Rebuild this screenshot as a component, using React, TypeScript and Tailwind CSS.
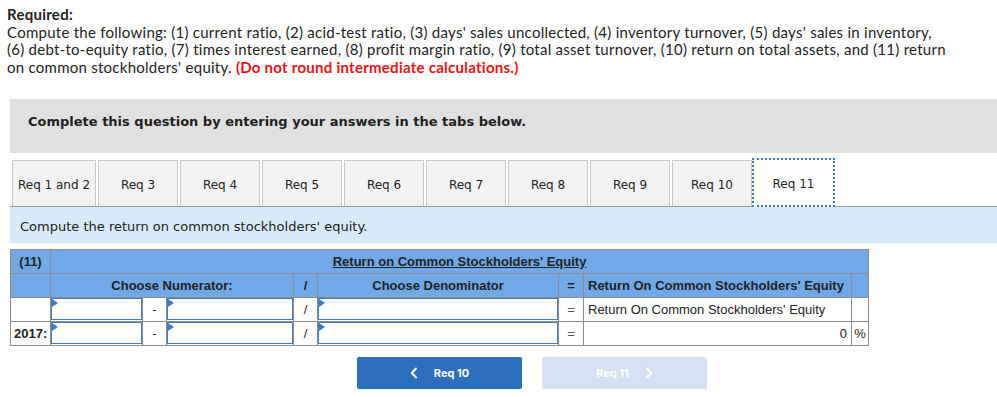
const TABS = ["Req 1 and 2", "Req 3", "Req 4", "Req 5", "Req 6", "Req 7", "Req 8", "Req 9", "Req 10"];

function Picker({ w }: { w: string }) {
  return (
    <div className={`relative h-[22px] ${w} border border-[#3f7bc4] bg-white`}>
      <span className="absolute left-0 top-0 h-0 w-0 border-y-[4px] border-l-[6px] border-y-transparent border-l-[#3f7bc4]" />
    </div>
  );
}

export default function App() {
  return (
    <div className="w-[997px] h-[397px] bg-white text-[#222]">
      <div className="pl-[7px] pt-[6px] font-['Lato',sans-serif] text-[15px] leading-[17.7px] tracking-[0.26px] whitespace-nowrap">
        <div className="font-bold">Required:</div>
        <div>
          Compute the following: (1) current ratio, (2) acid-test ratio, (3) days' sales uncollected, (4) inventory turnover, (5) days' sales in inventory,
          <br />
          (6) debt-to-equity ratio, (7) times interest earned, (8) profit margin ratio, (9) total asset turnover, (10) return on total assets, and (11) return
          <br />
          on common stockholders' equity. <span className="font-bold text-[#ee1111]">(Do not round intermediate calculations.)</span>
        </div>
      </div>

      <div className="ml-[10px] mt-[22px] flex h-[54px] items-center bg-[#e0e0e0] pb-[9px] pl-[18px] font-['DejaVu_Sans',sans-serif] text-[13px] font-bold">
        Complete this question by entering your answers in the tabs below.
      </div>

      <div className="ml-[10px] mt-[7px] flex h-[47px] items-stretch border-b border-[#999] pl-[2px] font-['DejaVu_Sans',sans-serif] text-[12px]">
        {TABS.map((t, i) => (
          <div
            key={t}
            className={`flex items-center justify-center border border-b-0 border-[#c8c8c8] bg-[#f2f2f2] pt-[3px] ${i === 0 ? "w-[84px]" : "w-[80px]"} ${i === TABS.length - 1 ? "" : "mr-[2px]"}`}
          >
            {t}
          </div>
        ))}
        <div className="relative -mt-[2px] -mb-[1px] flex w-[83px] items-center justify-center border-2 border-dotted border-[#3a7bd0] bg-white pt-[3px]">
          Req 11
        </div>
      </div>

      <div className="ml-[10px] flex h-[36px] items-center bg-[#d6eaf8] pl-[10px] pt-[4px] font-['DejaVu_Sans',sans-serif] text-[13px]">
        Compute the return on common stockholders' equity.
      </div>

      <table className="ml-[10px] mt-[6px] w-[858px] table-fixed border-collapse font-['Liberation_Sans',Arial,sans-serif] text-[13px]">
        <colgroup>
          <col className="w-[40px]" />
          <col className="w-[92px]" />
          <col className="w-[24px]" />
          <col className="w-[127px]" />
          <col className="w-[24px]" />
          <col className="w-[241px]" />
          <col className="w-[25px]" />
          <col className="w-[268px]" />
          <col className="w-[17px]" />
        </colgroup>
        <tbody>
          <tr className="h-[24px] bg-[#70a8e8] font-bold">
            <td className="border border-[#8c8c8c] text-center">(11)</td>
            <td colSpan={8} className="border border-[#8c8c8c] text-center">
              <span className="underline">Return on Common Stockholders' Equity</span>
            </td>
          </tr>
          <tr className="h-[24px] bg-[#70a8e8] font-bold">
            <td className="border border-[#8c8c8c]" />
            <td colSpan={3} className="border border-[#8c8c8c] text-center">Choose Numerator:</td>
            <td className="border border-[#8c8c8c] text-center">/</td>
            <td className="border border-[#8c8c8c] text-center">Choose Denominator</td>
            <td className="border border-[#8c8c8c] text-center">=</td>
            <td className="border border-[#8c8c8c] pl-[4px]">Return On Common Stockholders' Equity</td>
            <td className="border border-[#8c8c8c]" />
          </tr>
          <tr className="h-[24px] bg-white">
            <td className="border border-[#8c8c8c]" />
            <td className="border border-[#8c8c8c] p-0"><Picker w="w-full" /></td>
            <td className="border border-[#8c8c8c] text-center">-</td>
            <td className="border border-[#8c8c8c] p-0"><Picker w="w-full" /></td>
            <td className="border border-[#8c8c8c] text-center">/</td>
            <td className="border border-[#8c8c8c] p-0"><Picker w="w-full" /></td>
            <td className="border border-[#8c8c8c] text-center text-[#555]">=</td>
            <td className="border border-[#8c8c8c] pl-[4px]">Return On Common Stockholders' Equity</td>
            <td className="border border-[#8c8c8c]" />
          </tr>
          <tr className="h-[24px] bg-white">
            <td className="border border-[#8c8c8c] pl-[3px] font-bold">2017:</td>
            <td className="border border-[#8c8c8c] p-0"><Picker w="w-full" /></td>
            <td className="border border-[#8c8c8c] text-center">-</td>
            <td className="border border-[#8c8c8c] p-0"><Picker w="w-full" /></td>
            <td className="border border-[#8c8c8c] text-center">/</td>
            <td className="border border-[#8c8c8c] p-0"><Picker w="w-full" /></td>
            <td className="border border-[#8c8c8c] text-center text-[#555]">=</td>
            <td className="border border-[#8c8c8c] pr-[4px] text-right">0</td>
            <td className="border border-[#8c8c8c] text-center">%</td>
          </tr>
        </tbody>
      </table>

      <div className="mt-[11px] flex gap-[20px] pl-[357px] font-['Inter',sans-serif] text-[11px] font-bold text-white">
        <div className="flex h-[32px] w-[165px] items-center justify-center gap-[16px] rounded-[2px] bg-[#2d6fbf]">
          <svg width="8" height="12" viewBox="0 0 8 12" fill="none" stroke="white" strokeWidth="2" strokeLinecap="round" strokeLinejoin="round">
            <path d="M6 1.5 L1.8 6 L6 10.5" />
          </svg>
          <span>Req 10</span>
        </div>
        <div className="flex h-[32px] w-[165px] items-center justify-center gap-[16px] rounded-[2px] bg-[#d5e2f3]">
          <span>Req 11</span>
          <svg width="8" height="12" viewBox="0 0 8 12" fill="none" stroke="white" strokeWidth="2" strokeLinecap="round" strokeLinejoin="round">
            <path d="M2 1.5 L6.2 6 L2 10.5" />
          </svg>
        </div>
      </div>
    </div>
  );
}
